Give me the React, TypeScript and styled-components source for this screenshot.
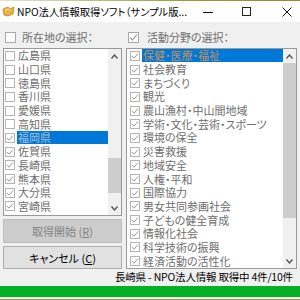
import styled, { createGlobalStyle } from 'styled-components';

const GlobalStyle = createGlobalStyle`
  html, body {
    margin: 0;
    padding: 0;
    background: #f0f0f0;
  }
  #root {
    width: 300px;
    height: 300px;
  }
`;

const FONT = `"Noto Sans CJK JP", "Noto Sans", "Liberation Sans", sans-serif`;

const Window = styled.div`
  width: 300px;
  height: 300px;
  display: flex;
  flex-direction: column;
  overflow: hidden;
  background: #f0f0f0;
  font-family: ${FONT};
  font-feature-settings: "palt";
  font-size: 11px;
  color: #000;
  border-bottom: 1px solid #9c9c50;
  box-sizing: border-box;
`;

const TopEdge = styled.div`
  height: 1px;
  flex: none;
  background: linear-gradient(to right, #e4e4d4, #9a9a40 60%, #8c8c30);
`;

const TitleBar = styled.div`
  height: 21px;
  flex: none;
  display: flex;
  align-items: center;
  background: #fff;
`;

const AppIcon = styled.div`
  width: 17px;
  height: 21px;
  display: flex;
  align-items: center;
  justify-content: center;
  flex: none;
`;

const Title = styled.div`
  flex: 1;
  min-width: 0;
  white-space: nowrap;
  overflow-x: clip;
  font-size: 10.3px;
  line-height: 21px;
`;

const Controls = styled.div`
  display: flex;
  flex: none;
`;

const CtrlButton = styled.div<{ $w: number; $shift?: number }>`
  width: ${p => p.$w}px;
  height: 21px;
  display: flex;
  align-items: center;
  justify-content: center;
  padding-left: ${p => p.$shift || 0}px;
  box-sizing: border-box;
`;

const Body = styled.div`
  display: grid;
  grid-template-columns: 119px 171px;
  column-gap: 4px;
  padding: 0 3px;
  height: 247px;
  flex: none;
`;

const Column = styled.div`
  display: flex;
  flex-direction: column;
  min-width: 0;
`;

const Header = styled.div<{ $gap: number }>`
  height: 26px;
  padding: 4px 0 0 2px;
  box-sizing: border-box;
  display: flex;
  align-items: center;
  gap: ${p => p.$gap}px;
  color: #6d6d6d;
  flex: none;
`;

const HeaderBox = styled.span`
  width: 11px;
  height: 11px;
  border: 1px solid #a8a8a8;
  background: #fff;
  box-sizing: border-box;
  display: flex;
  align-items: center;
  justify-content: center;
`;

const ListBox = styled.div<{ $h: number }>`
  height: ${p => p.$h}px;
  border: 1px solid #9a9a9a;
  background: #fff;
  box-sizing: border-box;
  display: flex;
  flex: none;
`;

const Items = styled.div`
  flex: 1;
  min-width: 0;
`;

const Item = styled.div<{ $pad: number }>`
  height: 13.7px;
  display: flex;
  align-items: center;
  padding-left: ${p => p.$pad}px;
  color: #6d6d6d;
`;

const ItemBox = styled.span`
  width: 10px;
  height: 10px;
  border: 1px solid #b4b4b4;
  box-sizing: border-box;
  flex: none;
  margin-right: 2px;
  display: flex;
  align-items: center;
  justify-content: center;
`;

const Label = styled.span<{ $selected: boolean; $selColor: string }>`
  flex: 1;
  height: 13px;
  line-height: 13px;
  padding-left: 1px;
  white-space: nowrap;
  overflow-x: clip;
  background: ${p => (p.$selected ? '#0078d7' : 'transparent')};
  color: ${p => (p.$selected ? p.$selColor : '#6d6d6d')};
`;

const ScrollBar = styled.div`
  width: 13px;
  flex: none;
  display: flex;
  flex-direction: column;
  background: #f0f0f0;
`;

const Arrow = styled.div`
  height: 14px;
  flex: none;
  display: flex;
  align-items: center;
  justify-content: center;
`;

const Track = styled.div`
  flex: 1;
  display: flex;
  flex-direction: column;
`;

const Thumb = styled.div<{ $top: number; $h: number }>`
  margin-top: ${p => p.$top}px;
  height: ${p => p.$h}px;
  background: #cdcdcd;
`;

const Button = styled.div<{ $disabled?: boolean; $h: number }>`
  margin-top: 3px;
  height: ${p => p.$h}px;
  box-sizing: border-box;
  display: flex;
  align-items: center;
  justify-content: center;
  background: ${p => (p.$disabled ? '#cccccc' : '#e1e1e1')};
  border: 1px solid ${p => (p.$disabled ? '#bfbfbf' : '#adadad')};
  color: ${p => (p.$disabled ? '#838383' : '#000')};
  flex: none;
`;

const Status = styled.div`
  height: 16px;
  flex: none;
  padding-left: 115px;
  font-size: 10.5px;
  letter-spacing: -0.2px;
  line-height: 16px;
  white-space: nowrap;
  overflow-x: clip;
`;

const Progress = styled.div`
  margin-top: 1px;
  height: 11px;
  flex: none;
  background: #06b025;
`;

const Check = ({ size = 8 }: { size?: number }) => (
  <svg width={size} height={size} viewBox="0 0 8 8">
    <polyline points="1,4 3,6.2 7,1.5" fill="none" stroke="#9a9a9a" strokeWidth="1" />
  </svg>
);

const Chevron = ({ up }: { up: boolean }) => (
  <svg width="7" height="5" viewBox="0 0 7 5">
    <polyline
      points={up ? '0.5,4.5 3.5,1 6.5,4.5' : '0.5,0.5 3.5,4 6.5,0.5'}
      fill="none"
      stroke="#505050"
      strokeWidth="1.3"
    />
  </svg>
);

const prefectures = ['広島県', '山口県', '徳島県', '香川県', '愛媛県', '高知県', '福岡県', '佐賀県', '長崎県', '熊本県', '大分県', '宮崎県'];

const fields = [
  '保健・医療・福祉', '社会教育', 'まちづくり', '観光', '農山漁村・中山間地域', '学術・文化・芸術・スポーツ',
  '環境の保全', '災害救援', '地域安全', '人権・平和', '国際協力', '男女共同参画社会',
  '子どもの健全育成', '情報化社会', '科学技術の振興', '経済活動の活性化',
];

interface ListProps {
  items: string[];
  checkedFrom: number;
  selected: number;
  height: number;
  pad: number;
  selColor: string;
  thumbTop: number;
  thumbH: number;
}

const CheckList = ({ items, checkedFrom, selected, height, pad, selColor, thumbTop, thumbH }: ListProps) => (
  <ListBox $h={height}>
    <Items>
      {items.map((name, i) => (
        <Item key={name} $pad={pad}>
          <ItemBox>{i >= checkedFrom && <Check />}</ItemBox>
          <Label $selected={i === selected} $selColor={selColor}>{name}</Label>
        </Item>
      ))}
    </Items>
    <ScrollBar>
      <Arrow><Chevron up /></Arrow>
      <Track>
        <Thumb $top={thumbTop} $h={thumbH} />
      </Track>
      <Arrow><Chevron up={false} /></Arrow>
    </ScrollBar>
  </ListBox>
);

export default function App() {
  return (
    <>
      <GlobalStyle />
      <Window>
        <TopEdge />
        <TitleBar>
          <AppIcon>
            <svg width="13" height="13" viewBox="0 0 13 13">
              <path d="M1 4 L6 2 L8 4 L12 2 L11 9 L6 11 L2 10 Z" fill="#e6b53a" stroke="#b7862a" strokeWidth="0.8" />
              <path d="M3 5 L7 4 L9 6" fill="none" stroke="#fbe08a" strokeWidth="1" />
            </svg>
          </AppIcon>
          <Title>NPO法人情報取得ソフト（サンプル版...</Title>
          <Controls>
            <CtrlButton $w={38}>
              <svg width="10" height="10" viewBox="0 0 10 10">
                <line x1="0" y1="5.5" x2="10" y2="5.5" stroke="#111" strokeWidth="1" />
              </svg>
            </CtrlButton>
            <CtrlButton $w={38}>
              <svg width="9" height="9" viewBox="0 0 9 9">
                <rect x="0.5" y="0.5" width="8" height="8" fill="none" stroke="#222" strokeWidth="1" />
              </svg>
            </CtrlButton>
            <CtrlButton $w={35} $shift={8}>
              <svg width="10" height="10" viewBox="0 0 10 10">
                <path d="M0.5 0.5 L9.5 9.5 M9.5 0.5 L0.5 9.5" stroke="#111" strokeWidth="1" />
              </svg>
            </CtrlButton>
          </Controls>
        </TitleBar>

        <Body>
          <Column>
            <Header $gap={6}>
              <HeaderBox />
              <span>所在地の選択：</span>
            </Header>
            <CheckList
              items={prefectures}
              checkedFrom={6}
              selected={6}
              height={168}
              pad={1}
              selColor="#a9bdd6"
              thumbTop={95}
              thumbH={35}
            />
            <Button $disabled $h={24}>取得開始 (<u>R</u>)</Button>
            <Button $h={23}>キャンセル (<u>C</u>)</Button>
          </Column>
          <Column>
            <Header $gap={8}>
              <HeaderBox><Check size={9} /></HeaderBox>
              <span>活動分野の選択：</span>
            </Header>
            <CheckList
              items={fields}
              checkedFrom={0}
              selected={0}
              height={221}
              pad={3}
              selColor="#c0905a"
              thumbTop={0}
              thumbH={155}
            />
          </Column>
        </Body>

        <Status>長崎県 - NPO法人情報 取得中 4件/10件</Status>
        <Progress />
      </Window>
    </>
  );
}
